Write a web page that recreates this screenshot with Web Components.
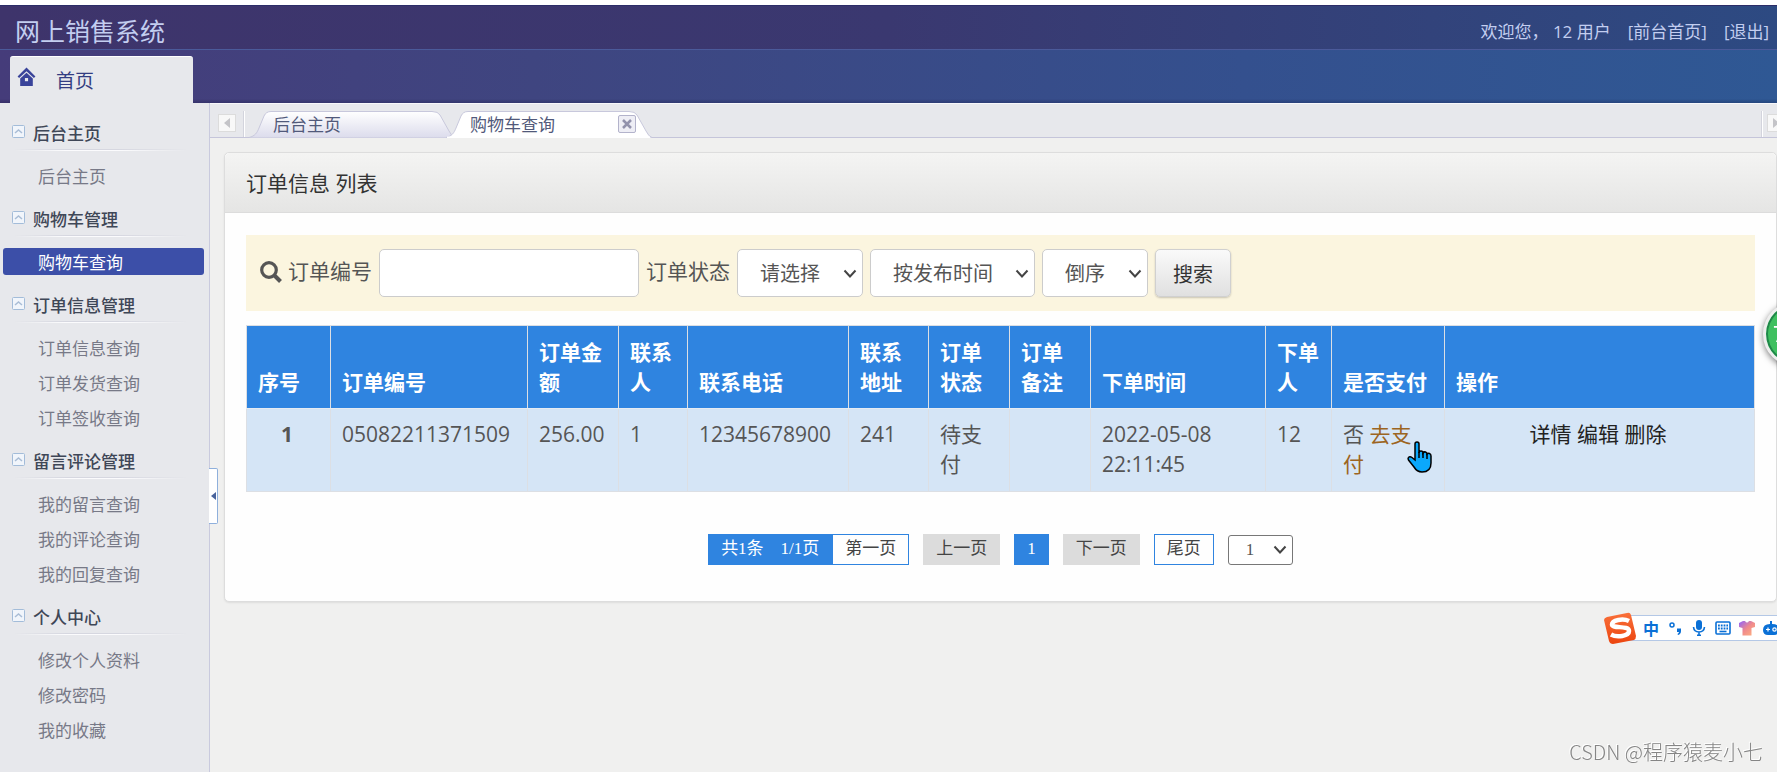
<!DOCTYPE html>
<html lang="zh-CN">
<head>
<meta charset="UTF-8">
<title>网上销售系统</title>
<style>
    html, body {
        margin: 0;
        height: 100%;
    }

    body {
        --song: "Liberation Serif", "Noto Sans CJK SC", serif;
        --hei: "Open Sans", "Noto Sans CJK SC", sans-serif;
        --blue: #2f84e0;
        display: flex;
        flex-direction: column;
        overflow: hidden;
        background: #f0f0ef;
        font-family: var(--hei);
        font-size: 17px;
        color: #555;
    }

    .layout {
        display: flex;
        flex: 1;
        min-height: 0;
    }

    .main {
        flex: 1;
        min-width: 0;
        display: flex;
        flex-direction: column;
    }
</style>
</head>
<body>
<app-header name="网上销售系统">
    <span slot="user">欢迎您， 12 用户</span>
</app-header>
<div class="layout">
    <side-menu>
        <menu-group label="后台主页">
            <menu-item>后台主页</menu-item>
        </menu-group>
        <menu-group label="购物车管理">
            <menu-item active>购物车查询</menu-item>
        </menu-group>
        <menu-group label="订单信息管理">
            <menu-item>订单信息查询</menu-item>
            <menu-item>订单发货查询</menu-item>
            <menu-item>订单签收查询</menu-item>
        </menu-group>
        <menu-group label="留言评论管理">
            <menu-item>我的留言查询</menu-item>
            <menu-item>我的评论查询</menu-item>
            <menu-item>我的回复查询</menu-item>
        </menu-group>
        <menu-group label="个人中心">
            <menu-item>修改个人资料</menu-item>
            <menu-item>修改密码</menu-item>
            <menu-item>我的收藏</menu-item>
        </menu-group>
    </side-menu>
    <div class="main">
        <tab-strip>
            <page-tab>后台主页</page-tab>
            <page-tab active>购物车查询</page-tab>
        </tab-strip>
        <info-card>
            <span slot="title">订单信息 列表</span>
            <search-bar></search-bar>
            <order-table></order-table>
            <page-bar></page-bar>
        </info-card>
    </div>
</div>
<float-ball>72</float-ball>
<ime-bar></ime-bar>
<water-mark>CSDN @程序猿麦小七</water-mark>
<hand-cursor></hand-cursor>

<script>
class AppHeader extends HTMLElement {
    constructor() {
        super();
        let shadowRoot = this.attachShadow({mode: 'open'});
        shadowRoot.innerHTML = `
        <style>
            :host {
                display: block;
                border-top: 5px solid #fff;
                color: #c3cef0;
            }

            .top {
                display: flex;
                align-items: center;
                justify-content: space-between;
                box-sizing: border-box;
                height: 44px;
                padding: 4px 8px 0 15px;
                border-top: 1px solid #2c2d68;
                background: linear-gradient(90deg, #3e346b, #3a3870 50%, #2d4a82);
            }

            h1 {
                margin: 0;
                font-size: 25px;
                font-weight: 400;
            }

            .links {
                display: flex;
                gap: 17px;
                padding-top: 2px;
                white-space: nowrap;
            }

            a {
                color: inherit;
                text-decoration: none;
            }

            .bar {
                display: flex;
                align-items: flex-end;
                box-sizing: border-box;
                height: 54px;
                padding-left: 10px;
                border-top: 1px solid #4b5a9a;
                background:
                    linear-gradient(rgba(0, 0, 40, 0), rgba(0, 0, 40, 0) 92%, rgba(0, 0, 40, .2)),
                    linear-gradient(90deg, #453c7a, #3f4580 30%, #34508e 70%, #2f5894);
            }

            .home {
                display: flex;
                align-items: center;
                gap: 20px;
                box-sizing: border-box;
                width: 183px;
                height: 47px;
                padding: 0 0 2px 7px;
                border-radius: 3px 3px 0 0;
                border-top: 1px solid #fff;
                background: #e7e8ec;
                color: #333d82;
                font: 19px var(--song);
            }

            .home svg {
                margin-bottom: 4px;
            }
        </style>
        <div class="top">
            <h1></h1>
            <div class="links">
                <slot name="user"></slot>
                <a href="#">[前台首页]</a>
                <a href="#">[退出]</a>
            </div>
        </div>
        <div class="bar">
            <a class="home" href="#">
                <svg width="19" height="20" viewBox="0 0 18 19">
                    <path d="M9 .5 17.500 9 16 10.500 9 4 2 10.500 .5 9Z" fill="#39439a"/>
                    <path d="M3 11 9 5.500 15 11V18H3Z" fill="#39439a"/>
                    <rect x="7.500" y="10.500" width="3" height="3" fill="#e7e8ec"/>
                </svg>
                <span>首页</span>
            </a>
        </div>
        `
        shadowRoot.querySelector('h1').innerText = this.getAttribute("name");
    }
}

class SideMenu extends HTMLElement {
    constructor() {
        super();
        let shadowRoot = this.attachShadow({mode: 'open'});
        shadowRoot.innerHTML = `
        <style>
            :host {
                position: relative;
                display: block;
                box-sizing: border-box;
                width: 210px;
                padding-top: 6px;
                border-right: 1px solid #c9cade;
                background: #e7e8ec;
                font-family: var(--song);
            }

            button {
                position: absolute;
                left: 209px;
                top: 365px;
                width: 9px;
                height: 56px;
                padding: 0;
                border: 1px solid #8fb0dc;
                border-left: 0;
                border-radius: 0 2px 2px 0;
                background: #fff;
            }

            svg {
                display: block;
                margin: 0 auto;
            }
        </style>
        <nav><slot></slot></nav>
        <button aria-label="collapse">
            <svg width="5" height="8" viewBox="0 0 5 8"><path d="M5 0V8L0 4Z" fill="#48639c"/></svg>
        </button>
        `
    }
}

class MenuGroup extends HTMLElement {
    constructor() {
        super();
        let shadowRoot = this.attachShadow({mode: 'open'});
        shadowRoot.innerHTML = `
        <style>
            :host {
                display: block;
            }

            .head {
                display: flex;
                align-items: center;
                gap: 8px;
                height: 40px;
                margin-left: 12px;
                color: #3f4757;
                font-weight: 500;
                padding-top: 6px;
                box-sizing: border-box;
            }

            .head svg {
                margin-bottom: 2px;
            }

            .line {
                height: 2px;
                margin: 0 22px 9px 14px;
                background: linear-gradient(#d6d7e0 50%, #fbfbfd 50%);
                -webkit-mask-image: linear-gradient(90deg, transparent, #000 30%, #000 60%, transparent);
            }
        </style>
        <div class="head">
            <svg width="13" height="13" viewBox="0 0 13 13">
                <rect x=".5" y=".5" width="12" height="12" rx="1" fill="#f1f5fb" stroke="#a3bcd9"/>
                <path d="M3 8 6.500 5 10 8" fill="none" stroke="#a9bdd6" stroke-width="1.500"/>
            </svg>
            <span></span>
        </div>
        <div class="line"></div>
        <slot></slot>
        `
        shadowRoot.querySelector('span').innerText = this.getAttribute("label");
    }
}

class MenuItem extends HTMLElement {
    constructor() {
        super();
        let shadowRoot = this.attachShadow({mode: 'open'});
        shadowRoot.innerHTML = `
        <style>
            :host {
                display: block;
                padding: 2px 5px 6px 3px;
            }

            a {
                display: block;
                padding: 5px 0 0 35px;
                border-radius: 3px;
                line-height: 22px;
                color: #777987;
                text-decoration: none;
            }

            :host([active]) a {
                background: #3c4fa8;
                color: #fff;
            }
        </style>
        <a href="#"><slot></slot></a>
        `
    }
}

class TabStrip extends HTMLElement {
    constructor() {
        super();
        let shadowRoot = this.attachShadow({mode: 'open'});
        shadowRoot.innerHTML = `
        <style>
            :host {
                display: flex;
                align-items: flex-end;
                box-sizing: border-box;
                height: 35px;
                padding-left: 8px;
                border-top: 1px solid #f7f7fa;
                border-bottom: 1px solid #c5c5da;
                background: #e7e8ec;
                font-family: var(--song);
            }

            button {
                width: 18px;
                height: 18px;
                padding: 0;
                margin-bottom: 5px;
                border: 1px solid #dcdcdc;
                background: #f8f8f8;
                line-height: 0;
                flex: none;
            }

            .sep {
                flex: none;
                width: 1px;
                height: 26px;
                margin: 0 4px 0 7px;
                border-left: 1px solid #d3d4dd;
                background: #fff;
            }

            .tabs {
                display: flex;
                flex: 1;
                align-self: flex-end;
                margin-bottom: -1px;
            }

            .next {
                margin-right: -8px;
            }
        </style>
        <button aria-label="prev"><svg width="6" height="10" viewBox="0 0 6 10"><path d="M6 0V10L0 5Z" fill="#c4c4c8"/></svg></button>
        <span class="sep"></span>
        <div class="tabs"><slot></slot></div>
        <span class="sep"></span>
        <button class="next" aria-label="next"><svg width="6" height="10" viewBox="0 0 6 10"><path d="M0 0V10L6 5Z" fill="#c4c4c8"/></svg></button>
        `
    }
}

class PageTab extends HTMLElement {
    constructor() {
        super();
        let active = this.hasAttribute("active");
        let shadowRoot = this.attachShadow({mode: 'open'});
        shadowRoot.innerHTML = `
        <style>
            :host {
                display: grid;
                width: 206px;
                height: 27px;
                margin-right: -9px;
            }

            :host([active]) {
                z-index: 1;
            }

            svg, .label {
                grid-area: 1 / 1;
            }

            .label {
                display: flex;
                align-items: center;
                justify-content: space-between;
                padding: 0 16px 2px 24px;
                color: #51597a;
            }

            button {
                display: grid;
                place-items: center;
                width: 18px;
                height: 18px;
                padding: 0;
                border: 1px solid #b3b3cb;
                border-radius: 2px;
                background: #eeeef5;
            }
        </style>
        <svg width="206" height="27" viewBox="0 0 206 27">
            <defs>
                <linearGradient id="fill" x2="0" y2="1">
                    <stop offset="0" stop-color="#fff"/>
                    <stop offset="1" stop-color="${active ? '#fff' : '#dcdcec'}"/>
                </linearGradient>
            </defs>
            <path d="M0 26.500C6 25 8 22 10 17L15 5Q17 .5 22 .5H183Q189 .5 191 4L200 20Q203 26 206 26.500" fill="url(#fill)" stroke="#c8c8dc"/>
            ${active ? '<path d="M1 26.500H204" stroke="#fff" stroke-width="2"/>' : ''}
        </svg>
        <div class="label">
            <slot></slot>
            ${active ? '<button aria-label="close"><svg width="10" height="10" viewBox="0 0 10 10"><path d="M1 1 9 9M9 1 1 9" stroke="#9292ac" stroke-width="2.500"/></svg></button>' : ''}
        </div>
        `
    }
}

class InfoCard extends HTMLElement {
    constructor() {
        super();
        let shadowRoot = this.attachShadow({mode: 'open'});
        shadowRoot.innerHTML = `
        <style>
            :host {
                display: block;
                margin: 14px 0 0 14px;
                border: 1px solid #ddd;
                border-radius: 5px;
                box-shadow: 0 1px 2px rgba(0, 0, 0, .08);
                background: #fefefe;
            }

            h2 {
                margin: 0;
                padding: 2px 21px 0;
                border-bottom: 1px solid #dcdcdc;
                border-radius: 5px 5px 0 0;
                background: linear-gradient(#f4f4f3, #e5e5e4);
                color: #333;
                font-size: 21px;
                font-weight: 400;
                line-height: 57px;
            }

            .body {
                padding: 22px 21px 36px;
            }
        </style>
        <h2><slot name="title"></slot></h2>
        <div class="body"><slot></slot></div>
        `
    }
}

class DropDown extends HTMLElement {
    constructor() {
        super();
        let shadowRoot = this.attachShadow({mode: 'open'});
        shadowRoot.innerHTML = `
        <style>
            :host {
                display: grid;
                align-items: center;
            }

            select, svg {
                grid-area: 1 / 1;
            }

            select {
                appearance: none;
                box-sizing: border-box;
                width: 100%;
                height: 100%;
                padding: 0 0 0 var(--pad, 22px);
                border: 1px solid var(--line, #ccc);
                border-radius: var(--radius, 5px);
                background: #fff;
                color: #555;
                font: inherit;
            }

            svg {
                justify-self: end;
                margin-right: 6px;
                pointer-events: none;
            }
        </style>
        <select aria-label="${this.getAttribute("label")}"><option>${this.getAttribute("value")}</option></select>
        <svg width="14" height="9" viewBox="0 0 14 9"><path d="M1.500 1.500 7 7.500 12.500 1.500" fill="none" stroke="#444" stroke-width="2"/></svg>
        `
    }
}

class SearchBar extends HTMLElement {
    constructor() {
        super();
        let shadowRoot = this.attachShadow({mode: 'open'});
        shadowRoot.innerHTML = `
        <style>
            :host {
                display: block;
                margin-bottom: 14px;
                background: #fbf5df;
            }

            form {
                display: flex;
                align-items: center;
                gap: 7px;
                padding: 14px;
                font-size: 21px;
            }

            form > svg {
                margin: 0 -1px 2px 0;
            }

            label {
                padding-bottom: 4px;
                white-space: nowrap;
                line-height: 30px;
            }

            input, drop-down, button {
                box-sizing: border-box;
                height: 48px;
                font-size: 20px;
            }

            input {
                width: 260px;
                border: 1px solid #ccc;
                border-radius: 5px;
                background: #fff;
            }

            .state { width: 126px; }
            .sort { width: 165px; }
            .order { width: 106px; }

            button {
                width: 76px;
                padding: 0;
                border: 1px solid #d0d0d0;
                border-radius: 5px;
                box-shadow: 0 1px 2px rgba(0, 0, 0, .2);
                background: linear-gradient(#fafafa, #e0e0e0);
                color: #333;
                font-family: inherit;
            }
        </style>
        <form onsubmit="return false">
            <svg width="22" height="22" viewBox="0 0 22 22" fill="none" stroke="#555">
                <circle cx="9" cy="9" r="7.300" stroke-width="3.200"/>
                <path d="M14.500 14.500 20.500 20.500" stroke-width="4"/>
            </svg>
            <label for="no">订单编号</label>
            <input id="no" type="text">
            <label>订单状态</label>
            <drop-down class="state" label="订单状态" value="请选择"></drop-down>
            <drop-down class="sort" label="排序" value="按发布时间"></drop-down>
            <drop-down class="order" label="顺序" value="倒序"></drop-down>
            <button>搜索</button>
        </form>
        `
    }
}

class OrderTable extends HTMLElement {
    constructor() {
        super();
        let columns = [
            ["序号", 84], ["订单编号", 197], ["订单金额", 91], ["联系人", 69], ["联系电话", 161], ["联系地址", 80],
            ["订单状态", 81], ["订单备注", 81], ["下单时间", 175], ["下单人", 66], ["是否支付", 113], ["操作", 0]
        ];
        let row = [
            "1", "05082211371509", "256.00", "1", "12345678900", "241", "待支付", "", "2022-05-08 22:11:45", "12",
            `否 <a class="pay" href="#">去支付</a>`,
            `<a href="#">详情</a> <a href="#">编辑</a> <a href="#">删除</a>`
        ];
        let shadowRoot = this.attachShadow({mode: 'open'});
        shadowRoot.innerHTML = `
        <style>
            :host {
                display: block;
                margin-bottom: 42px;
            }

            table {
                width: 100%;
                table-layout: fixed;
                border-collapse: collapse;
                font-size: 21px;
                line-height: 30px;
            }

            th, td {
                padding: 11px;
                border: 1px solid #dcdfe4;
            }

            th {
                border-bottom-color: #e6ebf2;
                background: var(--blue);
                color: #fff;
                text-align: left;
                vertical-align: bottom;
            }

            td {
                padding: 10px 14px 12px 11px;
                background: #d5e5f6;
                vertical-align: top;
            }

            td:first-child {
                font-weight: 700;
                text-align: center;
            }

            td:last-child {
                text-align: center;
            }

            a {
                color: #222;
                text-decoration: none;
            }

            .pay {
                color: #9c6421;
            }
        </style>
        <table>
            <colgroup>${columns.map(c => c[1] ? `<col style="width: ${c[1]}px">` : '<col>').join('')}</colgroup>
            <thead><tr>${columns.map(c => `<th>${c[0]}</th>`).join('')}</tr></thead>
            <tbody><tr>${row.map(v => `<td>${v}</td>`).join('')}</tr></tbody>
        </table>
        `
    }
}

class PageBar extends HTMLElement {
    constructor() {
        super();
        let shadowRoot = this.attachShadow({mode: 'open'});
        shadowRoot.innerHTML = `
        <style>
            :host {
                display: flex;
                justify-content: center;
                align-items: center;
                gap: 14px;
                font: 17px var(--song);
            }

            .first {
                display: flex;
            }

            .first span {
                white-space: pre;
            }

            a, span {
                box-sizing: border-box;
                height: 31px;
                padding: 0 12px;
                border: 1px solid var(--blue);
                line-height: 27px;
                color: #444;
                text-decoration: none;
            }

            .on {
                background: var(--blue);
                color: #fff;
            }

            .off {
                border-color: #dcdcdc;
                background: #dcdcdc;
            }

            drop-down {
                --pad: 17px;
                --line: #777;
                --radius: 3px;
                width: 65px;
                height: 30px;
            }
        </style>
        <div class="first"><span class="on">共1条    1/1页</span><a href="#">第一页</a></div>
        <a class="off" href="#">上一页</a>
        <a class="on" href="#">1</a>
        <a class="off" href="#">下一页</a>
        <a href="#">尾页</a>
        <drop-down label="页码" value="1"></drop-down>
        `
    }
}

class FloatBall extends HTMLElement {
    constructor() {
        super();
        let shadowRoot = this.attachShadow({mode: 'open'});
        shadowRoot.innerHTML = `
        <style>
            :host {
                position: fixed;
                right: -52px;
                top: 301px;
                box-sizing: border-box;
                width: 66px;
                height: 66px;
                padding-left: 7px;
                border: 3px solid #eee;
                border-radius: 50%;
                box-shadow: 0 2px 6px rgba(0, 0, 0, .5), inset 0 0 0 2px #20874a;
                background: #3fc060;
                color: #fff;
                font-size: 21px;
                line-height: 60px;
            }
        </style>
        <slot></slot>
        `
    }
}

class ImeBar extends HTMLElement {
    constructor() {
        super();
        let shadowRoot = this.attachShadow({mode: 'open'});
        shadowRoot.innerHTML = `
        <style>
            :host {
                position: fixed;
                right: -2px;
                top: 612px;
                display: flex;
                align-items: center;
            }

            .logo {
                z-index: 1;
                margin-right: -14px;
            }

            .tools {
                display: flex;
                align-items: center;
                gap: 8px;
                height: 24px;
                padding-left: 20px;
                border: 1px solid #b4c8e6;
                border-right: 0;
                background: #fff;
                color: #0a70d6;
                font: 700 16px "Noto Sans CJK SC", sans-serif;
            }
        </style>
        <svg class="logo" width="32" height="32" viewBox="0 0 32 32">
            <defs><linearGradient id="o" x2="0" y2="1"><stop offset="0" stop-color="#f9703a"/><stop offset="1" stop-color="#ec450f"/></linearGradient></defs>
            <path d="M3 5 23 1Q26 0 27 3L32 24Q32 27 30 28L9 32Q6 32 5 29L0 8Q0 6 3 5Z" fill="url(#o)"/>
            <path d="M25 9C19 6 8 8 8 12.500C8 17 25 13 25 19C25 24 13 26 7 22.500" fill="none" stroke="#fff" stroke-width="4.500"/>
        </svg>
        <div class="tools">
            <span>中</span>
            <svg width="16" height="16" viewBox="0 0 16 16"><circle cx="5" cy="5" r="2" fill="none" stroke="#0a70d6" stroke-width="1.500"/><path d="M10 8.500H14V11Q14 14 11 15L10.500 14Q12 13 12 12H10Z" fill="#0a70d6"/></svg>
            <svg width="16" height="16" viewBox="0 0 16 16"><rect x="5" y="0" width="6" height="10" rx="3" fill="#0a70d6"/><path d="M2.500 7Q3 12 8 12Q13 12 13.500 7M8 12V16M6 15.300H10" fill="none" stroke="#0a70d6" stroke-width="1.600"/></svg>
            <svg width="16" height="16" viewBox="0 0 16 16"><rect x="1" y="2" width="14" height="12" rx="1" fill="none" stroke="#0a70d6" stroke-width="1.600"/><path d="M3 5.500H13M3 8.500H13" stroke="#0a70d6" stroke-width="1.800" stroke-dasharray="1.800 1"/><path d="M4.500 11.500H11.500" stroke="#0a70d6" stroke-width="1.600"/></svg>
            <svg width="16" height="16" viewBox="0 0 16 16"><defs><linearGradient id="t" x2="1" y2="1"><stop offset="0" stop-color="#8d62ff"/><stop offset=".5" stop-color="#f08a8c"/><stop offset="1" stop-color="#ffb47e"/></linearGradient></defs><path d="M4 1H6Q8 4 10 1H12L16 3V7L12.500 8V15.500H3.500V8L0 7V3Z" fill="url(#t)"/></svg>
            <svg width="16" height="16" viewBox="0 0 16 16"><path d="M7 1H9V4Q16 4 16 9Q16 15 11 15H5Q0 15 0 10Q0 4 7 4Z" fill="#0a70d6"/><path d="M3 9.500H7M5 7.500V11.500" stroke="#fff" stroke-width="1.200"/><circle cx="11.500" cy="9.500" r="1.700" fill="none" stroke="#fff" stroke-width="1.200"/></svg>
        </div>
        `
    }
}

class WaterMark extends HTMLElement {
    constructor() {
        super();
        let shadowRoot = this.attachShadow({mode: 'open'});
        shadowRoot.innerHTML = `
        <style>
            :host {
                position: fixed;
                right: 14px;
                bottom: 5px;
                color: #858585;
                font: 300 20px/30px "Noto Sans CJK SC", sans-serif;
                text-shadow: -1px -1px 0 #fff;
            }
        </style>
        <slot></slot>
        `
    }
}

class HandCursor extends HTMLElement {
    constructor() {
        super();
        let shadowRoot = this.attachShadow({mode: 'open'});
        shadowRoot.innerHTML = `
        <style>
            :host {
                position: fixed;
                left: 1407px;
                top: 441px;
                pointer-events: none;
            }
        </style>
        <svg width="25" height="32" viewBox="0 0 25 32">
            <path d="M8 19V3Q8 1 10 1Q12 1 12 3V12Q12 10 14 10Q16 10 16 12Q17 10.500 18.500 11Q20 11.500 20 13Q21 12 22.500 12.500Q24 13 24 15V22Q24 31 15 31Q10 31 7 26L1.500 19Q.5 17 2 16Q3.500 15.500 5 16.500Z" fill="#0ba8fb" stroke="#000" stroke-width="1.500"/>
            <path d="M12 11V17M16 12V17M20 13V18" stroke="#000" stroke-width="1.500"/>
        </svg>
        `
    }
}

customElements.define("app-header", AppHeader);
customElements.define("side-menu", SideMenu);
customElements.define("menu-group", MenuGroup);
customElements.define("menu-item", MenuItem);
customElements.define("tab-strip", TabStrip);
customElements.define("page-tab", PageTab);
customElements.define("info-card", InfoCard);
customElements.define("drop-down", DropDown);
customElements.define("search-bar", SearchBar);
customElements.define("order-table", OrderTable);
customElements.define("page-bar", PageBar);
customElements.define("float-ball", FloatBall);
customElements.define("ime-bar", ImeBar);
customElements.define("water-mark", WaterMark);
customElements.define("hand-cursor", HandCursor);
</script>
</body>
</html>
